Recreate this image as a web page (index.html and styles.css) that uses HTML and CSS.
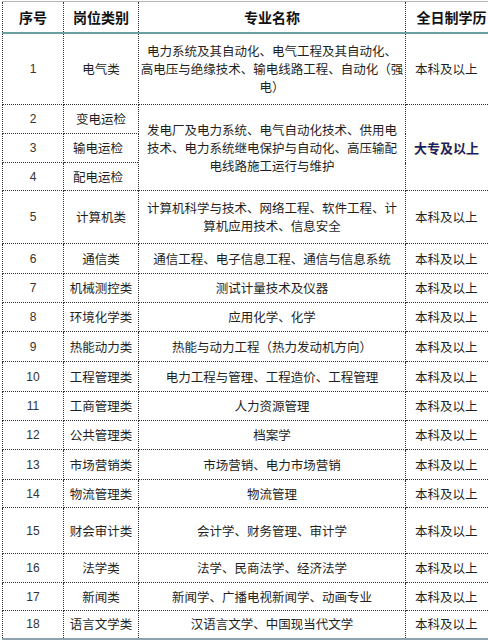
FILE: index.html
```html
<!DOCTYPE html>
<html lang="zh-CN">
<head>
<meta charset="utf-8">
<title>岗位专业要求</title>
<link rel="stylesheet" href="styles.css">
</head>
<body>
<table class="grid">
  <colgroup>
    <col class="c-no">
    <col class="c-cat">
    <col class="c-major">
    <col class="c-edu">
  </colgroup>
  <thead>
    <tr class="r-head">
      <th>序号</th>
      <th>岗位类别</th>
      <th>专业名称</th>
      <th>全日制学历</th>
    </tr>
  </thead>
  <tbody>
    <tr class="r-1">
      <td class="no">1</td>
      <td>电气类</td>
      <td class="major">电力系统及其自动化、电气工程及其自动化、<br>高电压与绝缘技术、输电线路工程、自动化（强<br>电）</td>
      <td>本科及以上</td>
    </tr>
    <tr class="r-2">
      <td class="no">2</td>
      <td>变电运检</td>
      <td class="major merged" rowspan="3">发电厂及电力系统、电气自动化技术、供用电<br>技术、电力系统继电保护与自动化、高压输配<br>电线路施工运行与维护</td>
      <td class="college" rowspan="3">大专及以上</td>
    </tr>
    <tr class="r-3">
      <td class="no">3</td>
      <td>输电运检</td>
    </tr>
    <tr class="r-4">
      <td class="no">4</td>
      <td>配电运检</td>
    </tr>
    <tr class="r-5">
      <td class="no">5</td>
      <td>计算机类</td>
      <td class="major">计算机科学与技术、网络工程、软件工程、计<br>算机应用技术、信息安全</td>
      <td>本科及以上</td>
    </tr>
    <tr class="r-6">
      <td class="no">6</td>
      <td>通信类</td>
      <td class="major">通信工程、电子信息工程、通信与信息系统</td>
      <td>本科及以上</td>
    </tr>
    <tr class="r-7">
      <td class="no">7</td>
      <td>机械测控类</td>
      <td class="major">测试计量技术及仪器</td>
      <td>本科及以上</td>
    </tr>
    <tr class="r-8">
      <td class="no">8</td>
      <td>环境化学类</td>
      <td class="major">应用化学、化学</td>
      <td>本科及以上</td>
    </tr>
    <tr class="r-9">
      <td class="no">9</td>
      <td>热能动力类</td>
      <td class="major">热能与动力工程（热力发动机方向）</td>
      <td>本科及以上</td>
    </tr>
    <tr class="r-10">
      <td class="no">10</td>
      <td>工程管理类</td>
      <td class="major">电力工程与管理、工程造价、工程管理</td>
      <td>本科及以上</td>
    </tr>
    <tr class="r-11">
      <td class="no">11</td>
      <td>工商管理类</td>
      <td class="major">人力资源管理</td>
      <td>本科及以上</td>
    </tr>
    <tr class="r-12">
      <td class="no">12</td>
      <td>公共管理类</td>
      <td class="major">档案学</td>
      <td>本科及以上</td>
    </tr>
    <tr class="r-13">
      <td class="no">13</td>
      <td>市场营销类</td>
      <td class="major">市场营销、电力市场营销</td>
      <td>本科及以上</td>
    </tr>
    <tr class="r-14">
      <td class="no">14</td>
      <td>物流管理类</td>
      <td class="major">物流管理</td>
      <td>本科及以上</td>
    </tr>
    <tr class="r-15">
      <td class="no">15</td>
      <td>财会审计类</td>
      <td class="major">会计学、财务管理、审计学</td>
      <td>本科及以上</td>
    </tr>
    <tr class="r-16">
      <td class="no">16</td>
      <td>法学类</td>
      <td class="major">法学、民商法学、经济法学</td>
      <td>本科及以上</td>
    </tr>
    <tr class="r-17">
      <td class="no">17</td>
      <td>新闻类</td>
      <td class="major">新闻学、广播电视新闻学、动画专业</td>
      <td>本科及以上</td>
    </tr>
    <tr class="r-18 last">
      <td class="no">18</td>
      <td>语言文学类</td>
      <td class="major">汉语言文学、中国现当代文学</td>
      <td>本科及以上</td>
    </tr>
  </tbody>
</table>
</body>
</html>
```

FILE: styles.css
```css
html, body {
  margin: 0;
  padding: 0;
  background: #ffffff;
  overflow: hidden;
}

body {
  width: 488px;
  padding: 1px 0 0 2px;
  box-sizing: border-box;
  font-family: "Noto Sans CJK SC", "Noto Sans", sans-serif;
  color: #1f1f1f;
}

.grid {
  border-collapse: collapse;
  table-layout: fixed;
  width: 495px;
  font-size: 12.5px;
  line-height: 18px;
}

.c-no { width: 61px; }
.c-cat { width: 75px; }
.c-major { width: 267px; }
.c-edu { width: 92px; }

.grid th,
.grid td {
  border: 1px dotted #333333;
  padding: 0 1px;
  text-align: center;
  vertical-align: middle;
  white-space: nowrap;
  overflow: hidden;
}

.grid th {
  border-top: 1px solid #b4b4b4;
  border-bottom: 2px solid #6b9e9e;
  font-size: 14px;
  font-weight: bold;
  color: #111111;
}

.grid td:last-child {
  text-align: left;
  padding-left: 9px;
}

.grid td.no {
  font-family: "Liberation Sans", "DejaVu Sans", sans-serif;
  font-size: 12px;
  color: #333333;
}

.grid td.major {
  padding: 0;
}

.grid td.college {
  font-weight: bold;
  font-size: 13px;
  color: #1d1d66;
  text-shadow: 0 0 5px #fbf3b8;
  padding-left: 8px;
}

.grid tr.last td {
  border-bottom: 2px solid #8ea3ae;
}

.r-head { height: 31px; }
.r-1 { height: 72px; }
.r-2 { height: 29px; }
.r-3 { height: 29px; }
.r-4 { height: 28px; }
.r-5 { height: 53px; }
.r-6 { height: 30px; }
.r-7 { height: 29px; }
.r-8 { height: 29px; }
.r-9 { height: 30px; }
.r-10 { height: 30px; }
.r-11 { height: 29px; }
.r-12 { height: 29px; }
.r-13 { height: 30px; }
.r-14 { height: 28px; }
.r-15 { height: 46px; }
.r-16 { height: 29px; }
.r-17 { height: 28px; }
.r-18 { height: 28px; }
```
